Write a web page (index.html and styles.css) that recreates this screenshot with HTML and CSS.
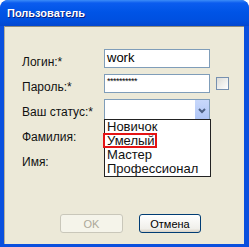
FILE: index.html
```html
<!DOCTYPE html>
<html>
	<head>
		<meta http-equiv="Content-Type" content="text/html; charset=UTF-8">
		<title>Пользователь</title>
		<link rel="stylesheet" href="styles.css">
	</head>
	<body>
		<div class="win">
			<div class="win-title">Пользователь</div>
			<div class="win-body">
				<div class="form">
					<div class="row"><div class="row-label">Логин:*</div><div class="field">work</div></div>
					<div class="row"><div class="row-label">Пароль:*</div><div class="field field-pass">**********</div><div class="check"></div></div>
					<div class="row">
						<div class="row-label">Ваш статус:*</div>
						<div class="field field-select">
							<span class="field-select-btn">
								<svg width="14" height="19" viewBox="0 0 14 19"><path d="M4 9 L7 12 L10 9" fill="none" stroke="#4D6185" stroke-width="2"/></svg>
							</span>
						</div>
					</div>
					<div class="row"><div class="row-label">Фамилия:</div><div class="field"></div></div>
					<div class="row"><div class="row-label">Имя:</div><div class="field"></div></div>
				</div>
				<!-- раскрытый список статусов -->
				<div class="list">
					<div class="list-item">Новичок</div>
					<div class="list-item">Умелый</div>
					<div class="list-item">Мастер</div>
					<div class="list-item">Профессионал</div>
					<div class="list-mark"></div>
				</div>
				<div class="buttons">
					<div class="btn btn-off">OK</div>
					<div class="btn">Отмена</div>
				</div>
			</div>
		</div>
	</body>
</html>
```
FILE: styles.css
```css
body{margin: 0px; font-family: "Liberation Sans", Arial, sans-serif;}
.win{display: flex; flex-direction: column; width: 249px; height: 247px; box-sizing: border-box; padding: 0px 5px 3px 4px; background: #0A50DE; border-radius: 8px 8px 0px 0px; overflow: hidden;}
.win-title{height: 26px; margin: 0px -5px 0px -4px; padding-left: 7px; display: flex; align-items: center; color: #fff; font-size: 11px; font-weight: bold; text-shadow: 1px 1px 0px #0A1E80; background: linear-gradient(#3C8CF8 0px, #0B5CEF 3px, #0054E6 12px, #0050E0 20px, #0347D0 26px); border-radius: 8px 8px 0px 0px;}
.win-body{flex: 1; position: relative; display: flex; flex-direction: column; background: #ECE9D8; border-top: 1px solid #8C8A7E; border-left: 1px solid #B3AF9C; padding: 22px 0px 11px 17px;}
.form{display: flex; flex-direction: column;}
.row{display: flex; height: 25px; align-items: flex-start;}
.row-label{width: 82px; padding-top: 6px; font-size: 12px; line-height: 14px; color: #111;}
.field{box-sizing: border-box; width: 106px; height: 19px; border: 1px solid #7F9DB9; background: #fff; padding: 0px 2px; font-size: 13px; line-height: 16px; color: #000;}
.field-pass{font-size: 9px; line-height: 10px; letter-spacing: -0.5px; padding-top: 1px;}
.field-select{height: 21px; display: flex; justify-content: flex-end; padding: 0px;}
.field-select-btn{width: 14px; height: 19px; background: linear-gradient(#C8D8FB, #B0C6F6); display: block;}
.field-select-btn svg{display: block;}
.check{box-sizing: border-box; width: 13px; height: 13px; margin: 3px 0px 0px 6px; border: 1px solid #7690B0; background: linear-gradient(135deg, #DCDCD7, #fff);}
.list{position: absolute; left: 99px; top: 92px; width: 107px; height: 58px; box-sizing: border-box; border: 1px solid #222; background: #fff;}
.list-item{height: 14px; line-height: 14px; padding-left: 2px; font-size: 13px; color: #111;}
.list-mark{position: absolute; left: -2px; top: 13px; width: 54px; height: 15px; box-sizing: border-box; border: 2px solid #E41414;}
.buttons{margin-top: auto; display: flex; gap: 16px; padding-left: 38px;}
.btn{box-sizing: border-box; width: 62px; height: 19px; display: flex; justify-content: center; align-items: center; font-size: 11px; color: #000; border: 1px solid #003C74; border-radius: 3px; background: linear-gradient(#FFFFFF, #F0EFEA 80%, #D8D2C6);}
.btn-off{width: 63px; color: #ACA899; border-color: #C9C7BA; background: #F5F4EA;}
```
